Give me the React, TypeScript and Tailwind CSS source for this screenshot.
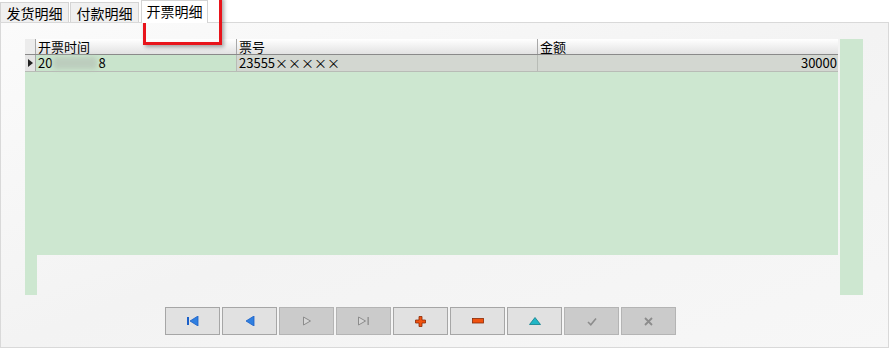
import React from "react";

const font = { fontFamily: '"Noto Sans CJK SC", "Liberation Sans", sans-serif' };

type NavButton = { key: string; disabled?: boolean; icon: React.ReactNode };

const buttons: NavButton[] = [
  {
    key: "first",
    icon: (
      <svg width="12" height="10" viewBox="0 0 12 10">
        <rect x="0" y="1" width="2" height="8" fill="#1a5fc8" />
        <path d="M11 0 L3 5 L11 10 Z" fill="#2f7fe0" stroke="#1a5fc8" strokeWidth="0.8" />
      </svg>
    ),
  },
  {
    key: "prior",
    icon: (
      <svg width="10" height="10" viewBox="0 0 10 10">
        <path d="M9 0 L1 5 L9 10 Z" fill="#2f7fe0" stroke="#1a5fc8" strokeWidth="0.8" />
      </svg>
    ),
  },
  {
    key: "next",
    disabled: true,
    icon: (
      <svg width="10" height="10" viewBox="0 0 10 10">
        <path d="M1.5 1 L8.5 5 L1.5 9 Z" fill="#d6d6d6" stroke="#8c8c8c" strokeWidth="1" />
      </svg>
    ),
  },
  {
    key: "last",
    disabled: true,
    icon: (
      <svg width="13" height="10" viewBox="0 0 13 10">
        <path d="M1.5 1 L8.5 5 L1.5 9 Z" fill="#d6d6d6" stroke="#8c8c8c" strokeWidth="1" />
        <rect x="10.5" y="1" width="1.3" height="8" fill="#8c8c8c" />
      </svg>
    ),
  },
  {
    key: "insert",
    icon: (
      <svg width="11" height="11" viewBox="0 0 11 11">
        <path
          d="M4 0.5 H7 V4 H10.5 V7 H7 V10.5 H4 V7 H0.5 V4 H4 Z"
          fill="#f0520f"
          stroke="#8a2a06"
          strokeWidth="0.8"
        />
      </svg>
    ),
  },
  {
    key: "delete",
    icon: (
      <svg width="12" height="6" viewBox="0 0 12 6">
        <rect x="0.5" y="0.5" width="11" height="4.5" fill="#f0520f" stroke="#8a2a06" strokeWidth="0.8" />
      </svg>
    ),
  },
  {
    key: "edit",
    icon: (
      <svg width="12" height="8" viewBox="0 0 12 8">
        <path d="M6 0.5 L11.5 7.5 H0.5 Z" fill="#21b6c6" stroke="#0f7f8c" strokeWidth="0.8" />
      </svg>
    ),
  },
  {
    key: "post",
    disabled: true,
    icon: (
      <svg width="10" height="9" viewBox="0 0 10 9">
        <path d="M1 5 L3.8 7.8 L9 1.5" fill="none" stroke="#8c8c8c" strokeWidth="1.6" />
      </svg>
    ),
  },
  {
    key: "cancel",
    disabled: true,
    icon: (
      <svg width="9" height="9" viewBox="0 0 9 9">
        <path d="M1 1 L8 8 M8 1 L1 8" stroke="#8c8c8c" strokeWidth="1.8" />
      </svg>
    ),
  },
];

const tabs = ["发货明细", "付款明细", "开票明细"];

export default function App() {
  return (
    <div
      className="relative h-[350px] w-[890px] overflow-hidden bg-white text-[14px] leading-none text-black"
      style={font}
    >
      {/* tabs */}
      <div className="flex h-[22px] items-end pl-0">
        {tabs.map((t, i) =>
          i === 2 ? (
            <div
              key={t}
              className="z-10 -mb-px ml-[1px] flex h-[23px] w-[67px] items-start justify-center border border-b-0 border-[#d4d4d4] bg-white pt-[3px]"
            >
              {t}
            </div>
          ) : (
            <div
              key={t}
              className="mr-[1px] flex h-[20px] w-[69px] items-center justify-center border border-b-0 border-[#d4d4d4] bg-[#f0f0f0]"
            >
              {t}
            </div>
          )
        )}
      </div>

      {/* panel */}
      <div className="h-[326px] w-[889px] border border-[#d9d9d9] bg-gradient-to-br from-[#fbfbfb] via-[#f3f3f3] to-[#f7f7f7] pl-[24px] pt-[16px]">
        <div className="flex gap-[2px]">
          <div className="flex w-[813px] flex-col">
            {/* header */}
            <div className="flex h-[16px] items-center border-b border-[#8a8a8a] bg-gradient-to-b from-white to-[#e2e2e2] text-[13px] leading-[14px]">
              <div className="h-full w-[11px] border-r border-[#a8a8a8] bg-[#ececec]" />
              <div className="flex h-full w-[201px] items-center border-r border-[#a8a8a8] pl-[2px]">开票时间</div>
              <div className="flex h-full w-[301px] items-center border-r border-[#a8a8a8] pl-[2px]">票号</div>
              <div className="flex h-full flex-1 items-center pl-[2px]">金额</div>
            </div>
            {/* row */}
            <div className="flex h-[17px] border-b border-[#b8bcb6] text-[13px] leading-[14px]">
              <div className="flex w-[11px] items-center justify-center border-r border-[#a8a8a8] bg-[#e4e4e4]">
                <svg width="5" height="8" viewBox="0 0 5 8">
                  <path d="M0 0 L5 4 L0 8 Z" fill="#222" />
                </svg>
              </div>
              <div className="flex w-[201px] items-center border-r border-[#b8bcb6] bg-[#c9e4cc] pl-[2px]">
                20
                <span className="mx-[1px] inline-block h-[12px] w-[44px] rounded-sm bg-[#bccdbd] blur-[2px]" />
                8
              </div>
              <div className="flex w-[301px] items-center border-r border-[#b8bcb6] bg-[#d3d7d1] pl-[2px]">
                {"23555×××××"}
              </div>
              <div className="flex flex-1 items-center justify-end bg-[#d3d7d1] pr-[1px]">30000</div>
            </div>
            {/* empty grid body */}
            <div className="h-[183px] bg-[#cde7d0]" />
            <div className="h-[40px] w-[12px] bg-[#cde7d0]" />
          </div>
          <div className="h-[256px] w-[23px] bg-[#cde7d0]" />
        </div>

        {/* navigator */}
        <div className="ml-[140px] mt-[12px] flex gap-[2px]">
          {buttons.map((b) => (
            <div
              key={b.key}
              className={
                b.disabled
                  ? "flex h-[28px] w-[55px] items-center justify-center border border-[#b4b4b4] bg-[#cbcbcb]"
                  : "flex h-[28px] w-[55px] items-center justify-center border border-[#a6a6a6] bg-[#e1e1e1]"
              }
            >
              {b.icon}
            </div>
          ))}
        </div>
      </div>

      {/* red highlight */}
      <div className="absolute left-[143px] top-[-4px] h-[49px] w-[79px] border-[3px] border-[#e8141b] shadow-[2px_2px_4px_rgba(0,0,0,0.35)]" />
    </div>
  );
}
